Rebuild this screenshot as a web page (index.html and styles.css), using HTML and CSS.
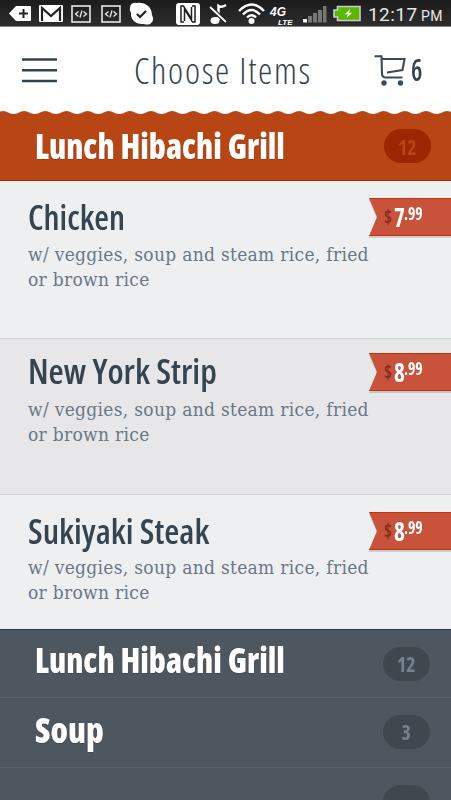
FILE: index.html
```
<!DOCTYPE html>
<html lang="en">
<head>
    <meta charset="UTF-8">
    <meta name="viewport" content="width=device-width, initial-scale=1.0">
    <title>Choose Items</title>
    <link rel="stylesheet" href="styles.css">
</head>
<body>
    <div class="status-bar">
        <svg class="status-icons" width="360" height="26" viewBox="0 0 360 26">
            <!-- back tag -->
            <path d="M9 13.5 L16 6 H30 Q31 6 31 7 V20 Q31 21 30 21 H16 Z" fill="#fff"/>
            <path d="M23.5 9 V18 M19 13.5 H28" stroke="#222" stroke-width="2"/>
            <!-- mail -->
            <rect x="39" y="5" width="24" height="17" rx="1" fill="#fff"/>
            <path d="M42 21 V8 L51 16 L60 8 V21" fill="none" stroke="#222" stroke-width="2.2"/>
            <!-- code -->
            <g fill="none" stroke="#e8e8e8" stroke-width="1.6">
                <rect x="72" y="6" width="18" height="16"/>
                <rect x="102" y="6" width="18" height="16"/>
                <path d="M78.500 11.500 L75.500 14 L78.500 16.500 M83.500 11.500 L86.500 14 L83.500 16.500 M82 10.500 L80 17.500" stroke-width="1.3"/>
                <path d="M108.500 11.500 L105.500 14 L108.500 16.500 M113.500 11.500 L116.500 14 L113.500 16.500 M112 10.500 L110 17.500" stroke-width="1.3"/>
            </g>
            <!-- check -->
            <path d="M130 7 Q131 2 137 3 C145 2 152 7 152 15 Q155 21 150 24 Q147 25 144 24 C136 25 130 19 131 13 Q129 10 130 7 Z" fill="#fff"/>
            <path d="M137 14 L140 17 L146 11" fill="none" stroke="#222" stroke-width="2.2"/>
            <!-- nfc -->
            <rect x="176" y="3" width="24" height="22" rx="3" fill="#fff"/>
            <path d="M184 22 H181 V6 H183.500 L191.500 19 V7 M192 6 H195 V22 H192.500 L184.500 9 V21" fill="none" stroke="#222" stroke-width="1.500"/>
            <!-- muted note -->
            <ellipse cx="215" cy="20.500" rx="4.500" ry="3.500" fill="#fff"/>
            <path d="M218.500 20 V6 Q221 8 226 5" fill="none" stroke="#fff" stroke-width="2.500"/>
            <path d="M210 7 L226 22" stroke="#222" stroke-width="4"/>
            <path d="M210 7 L226 22" stroke="#fff" stroke-width="1.800"/>
            <!-- wifi -->
            <g fill="none" stroke="#fff" stroke-width="2.400">
                <path d="M239 11 Q251.500 -2 264 11"/>
                <path d="M243 14.500 Q251.500 5.500 260 14.500"/>
                <path d="M247 17.500 Q251.500 13 256 17.500"/>
            </g>
            <circle cx="251.500" cy="21" r="3" fill="#fff"/>
            <text class="net" x="270" y="15.500">4G</text>
            <text class="lte" x="278" y="25">LTE</text>
            <!-- signal -->
            <rect x="303" y="19" width="4" height="3.500" fill="#fff"/>
            <path d="M308 16 h4 v6.500 h-4z M313 13 h4 v9.500 h-4z M318 10 h4 v12.500 h-4z M323 6 h3.500 v16.500 h-3.500z" fill="#777"/>
            <!-- battery -->
            <path d="M337.500 6.500 H360 V20.500 H337.500 V17 H334 V10 H337.500 Z" fill="#58b800" stroke="#ccc" stroke-width="1.600"/>
            <path d="M350 9 L344.500 14.500 L348 14 L346.500 18 L352.500 12.500 L349 13 Z" fill="#fff"/>
        </svg>
        <span class="clock">12:17 <small>PM</small></span>
    </div>

    <header class="header">
        <svg class="menu-icon" width="35" height="25" viewBox="0 0 35 25">
            <path d="M0 1.500 H35 M0 12.200 H35 M0 23 H35" stroke="#33434f" stroke-width="2.500"/>
        </svg>
        <h1 class="title"><span class="t t-title">Choose Items</span></h1>
        <div class="cart">
            <svg width="32" height="32" viewBox="0 0 32 32">
                <path d="M0.500 2.200 H7.500 L8 20 Q8.200 23.500 11.500 23.500 H28.500 M8 5 H30.500 L28.500 16 L13 18.500" fill="none" stroke="#3d4b57" stroke-width="2.100"/>
                <circle cx="10" cy="29" r="2.700" fill="#3d4b57"/>
                <circle cx="26.500" cy="29" r="2.700" fill="#3d4b57"/>
            </svg>
            <span class="t t-cart">6</span>
        </div>
    </header>

    <section class="category open">
        <svg class="scallop" width="451" height="6">
            <defs>
                <pattern id="wave" x="3" width="21.150" height="6" patternUnits="userSpaceOnUse">
                    <path d="M0 1 C4.500 1 5.500 4 10.600 4 C15.700 4 16.600 1 21.150 1 V-1 H0 Z" fill="#fff"/>
                </pattern>
            </defs>
            <rect width="451" height="6" fill="url(#wave)"/>
        </svg>
        <h2 class="category-name"><span class="t t-cat">Lunch Hibachi Grill</span></h2>
        <span class="badge"><span class="t t-badge">12</span></span>
    </section>

    <article class="item">
        <h3 class="item-name"><span class="t t-chicken">Chicken</span></h3>
        <p class="desc">w/ veggies, soup and steam rice, fried<br>or brown rice</p>
        <div class="price"><span class="ribbon"><span class="t t-dollar">$</span><span class="t t-whole">7</span><span class="t t-cents">.99</span></span></div>
    </article>

    <article class="item second">
        <h3 class="item-name"><span class="t t-strip">New York Strip</span></h3>
        <p class="desc">w/ veggies, soup and steam rice, fried<br>or brown rice</p>
        <div class="price"><span class="ribbon"><span class="t t-dollar">$</span><span class="t t-whole">8</span><span class="t t-cents">.99</span></span></div>
    </article>

    <article class="item third">
        <h3 class="item-name"><span class="t t-steak">Sukiyaki Steak</span></h3>
        <p class="desc">w/ veggies, soup and steam rice, fried<br>or brown rice</p>
        <div class="price"><span class="ribbon"><span class="t t-dollar">$</span><span class="t t-whole">8</span><span class="t t-cents">.99</span></span></div>
    </article>

    <section class="category first-closed">
        <h2 class="category-name"><span class="t t-cat">Lunch Hibachi Grill</span></h2>
        <span class="badge"><span class="t t-badge">12</span></span>
    </section>
    <section class="category soup">
        <h2 class="category-name"><span class="t t-soup">Soup</span></h2>
        <span class="badge"><span class="t t-badge">3</span></span>
    </section>
    <section class="category last">
        <span class="badge"></span>
    </section>
</body>
</html>
```
FILE: styles.css
```
* {
    box-sizing: border-box;
}
body {
    margin: 0;
    height: 800px;
    overflow: hidden;
    background-color: #4e565f;
    font-family: "Open Sans", sans-serif;
    color: #36444f;
}
h1, h2, h3, p {
    margin: 0;
    font-weight: normal;
}
/* condensed lettering */
.t {
    display: inline-block;
    white-space: nowrap;
    transform-origin: 0 50%;
    font-stretch: 75%;
}
.t-cat {
    transform: scaleX(0.93);
}
.t-soup {
    transform: scaleX(0.97);
}
.t-chicken {
    transform: scaleX(0.99);
}
.t-strip {
    transform: scaleX(1.025);
}
.t-steak {
    transform: scaleX(1.015);
}
.status-bar {
    height: 27px;
    background: linear-gradient(#1c1c1c, #2d2d2d);
    border-bottom: 1px solid #858585;
    display: flex;
    justify-content: space-between;
    padding-right: 8px;
}
.status-icons {
    overflow: visible;
}
.net, .lte {
    font-family: "Liberation Sans", sans-serif;
    font-weight: bold;
    font-style: italic;
    fill: #fff;
}
.net {
    font-size: 12px;
}
.lte {
    font-size: 8px;
}
.clock {
    font-family: Roboto, sans-serif;
    font-size: 19px;
    line-height: 29px;
    letter-spacing: 0.5px;
    color: #e8e8e8;
    white-space: nowrap;
}
.clock small {
    font-size: 14px;
    margin-left: -2px;
}
.header {
    height: 83px;
    background-color: #fff;
    display: grid;
    grid-template-columns: 112px 240px 1fr;
    padding-left: 22px;
}
.menu-icon {
    margin-top: 31px;
}
.title {
    font-size: 36px;
    line-height: 87px;
    font-weight: 350;
    letter-spacing: 1.7px;
}
.cart {
    display: flex;
    gap: 5px;
    padding-top: 27px;
}
.t-cart {
    font-size: 31px;
    line-height: 31px;
    font-weight: 600;
    transform: scaleX(0.82);
}
.category {
    height: 70px;
    display: flex;
    justify-content: space-between;
    border-bottom: 1px solid #59616b;
    padding: 0 21px 0 35px;
}
.open {
    position: relative;
    height: 71px;
    padding-right: 20px;
    background-color: #b84615;
    border-bottom-color: #b32406;
}
.scallop {
    position: absolute;
    top: 0;
    left: 0;
}
.category-name {
    font-size: 35px;
    line-height: 72px;
    font-weight: 800;
    color: #fff;
    text-shadow: 0 1px 1px rgba(35, 25, 25, 0.2);
}
.badge {
    width: 47px;
    height: 34px;
    margin-top: 17px;
    border-radius: 17px;
    background-color: #40484f;
    color: #758290;
    font-size: 22px;
    font-weight: 700;
    line-height: 32px;
    text-align: center;
}
.t-badge {
    transform-origin: 50% 50%;
    transform: scaleX(0.9);
}
.open .badge {
    margin-top: 19px;
    line-height: 34px;
    background-color: #9b2700;
    color: #b84615;
}
.first-closed {
    height: 69px;
    border-top: 1px solid #283846;
}
.first-closed .category-name {
    line-height: 60px;
}
.soup .category-name {
    line-height: 64px;
}
.last {
    justify-content: flex-end;
}
.item {
    height: 158px;
    display: grid;
    grid-template-columns: 340px 83px;
    grid-template-rows: 62px auto;
    padding-left: 28px;
    background-color: #eeeff1;
    border-bottom: 1px solid #d0d2d4;
}
.item-name {
    font-size: 34px;
    line-height: 72px;
    font-weight: 560;
}
.desc {
    grid-row: 2;
    margin-top: -1px;
    font-family: "DejaVu Serif Condensed", "DejaVu Serif", serif;
    font-size: 19px;
    line-height: 25px;
    letter-spacing: 0.3px;
    color: #697786;
    white-space: nowrap;
}
.second {
    height: 156px;
    background-color: #e7e7e9;
}
.second .item-name {
    line-height: 64px;
}
.second .desc {
    margin-top: -4px;
}
.third {
    height: 134px;
    border-bottom: 0;
}
.third .item-name {
    line-height: 72px;
}
.third .desc {
    margin-top: -2px;
}
.price {
    grid-column: 2;
    grid-row: 1;
    padding-top: 17px;
    filter: drop-shadow(0 2px 0 rgba(60, 70, 80, 0.2));
}
.second .price {
    padding-top: 14px;
}
.ribbon {
    display: flex;
    height: 38px;
    margin-left: 1px;
    padding-left: 15px;
    color: #fff;
    background-color: #c9523a;
    border-top: 1px solid #c43308;
    border-bottom: 1px solid #c43308;
    clip-path: polygon(0 0, 100% 0, 100% 100%, 0 100%, 8px 50%);
    font-weight: 700;
}
.t-dollar {
    width: 10px;
    font-size: 19px;
    line-height: 37px;
    color: #84301f;
    transform: scaleX(0.9);
}
.t-whole {
    width: 10px;
    font-size: 27px;
    line-height: 36px;
    transform: scaleX(0.86);
}
.t-cents {
    font-size: 18px;
    line-height: 29px;
    transform: scaleX(0.87);
}
```
